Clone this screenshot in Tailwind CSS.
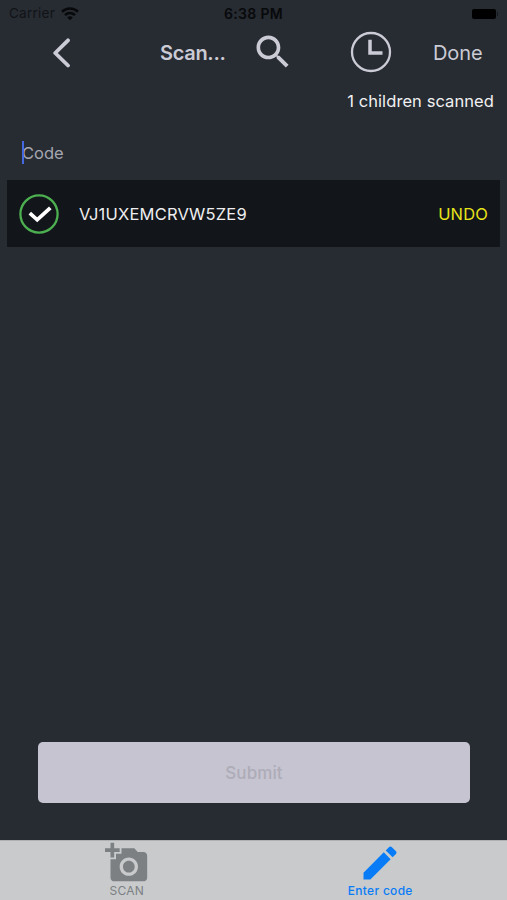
<!DOCTYPE html>
<html lang="en">
<head>
  <meta charset="UTF-8">
  <meta name="viewport" content="width=device-width, initial-scale=1.0">
  <title>Scan</title>
  <script src="https://cdn.jsdelivr.net/npm/@tailwindcss/browser@4"></script>
</head>
<body class="bg-[#272b32] font-['Inter','Liberation_Sans',sans-serif]">
  <div class="flex flex-col h-[900px] w-[507px] overflow-hidden">
    <!-- Status bar -->
    <div class="grid grid-cols-3 items-center h-[27px] shrink-0 pl-[9px] pr-[9px] text-[#08090b]">
      <div class="flex items-center gap-[6px]">
        <span class="text-[13.5px] tracking-[0.25px] text-[#111317]">Carrier</span>
        <svg class="w-[18px] h-[14px]" viewBox="0 0 18 14" fill="none" stroke="currentColor" stroke-width="2.6">
          <path d="M1 4.700c4.600-4.300 11.400-4.300 16 0"/>
          <path d="M4 8.100c2.900-2.700 7.100-2.700 10 0"/>
          <path d="M9 13.300L6.200 10.400c1.600-1.500 4-1.500 5.600 0z" fill="currentColor" stroke="none"/>
        </svg>
      </div>
      <span class="text-center text-[14px] font-semibold tracking-[0.35px] whitespace-nowrap">6:38 PM</span>
      <div class="flex items-center justify-end gap-[1px]">
        <div class="w-[24px] h-[10px] rounded-[2px] bg-black"></div>
        <div class="w-[1px] h-[4px] bg-[#15181c]"></div>
      </div>
    </div>

    <!-- Navigation -->
    <header class="flex items-center h-[50px] shrink-0 text-[#cbcbd5]">
      <svg class="ml-[51px] w-[20px] h-[32px]" viewBox="0 0 20 32" fill="none" stroke="currentColor" stroke-width="3.800" stroke-linecap="round" stroke-linejoin="round">
        <path d="M17 4.300L4.200 17l12.800 12.500"/>
      </svg>
      <h1 class="ml-[89px] w-[66px] pt-[1px] text-[20px] font-semibold tracking-[-0.3px] whitespace-nowrap">Scan...</h1>
      <svg class="ml-[25px] w-[44px] h-[44px]" viewBox="0 0 24 24" fill="currentColor">
        <path d="M15.500 14h-.79l-.28-.27C15.410 12.590 16 11.110 16 9.500 16 5.910 13.090 3 9.500 3S3 5.910 3 9.500 5.910 16 9.500 16c1.610 0 3.090-.59 4.230-1.570l.27.28v.79l5 4.990L20.490 19l-4.990-5zm-6 0C7.010 14 5 11.990 5 9.500S7.010 5 9.500 5 14 7.010 14 9.500 11.990 14 9.500 14z"/>
      </svg>
      <svg class="ml-[55px] w-[42px] h-[42px]" viewBox="0 0 42 42" fill="none" stroke="currentColor">
        <circle cx="21" cy="21" r="19" stroke-width="2.300"/>
        <path d="M20 8.800v13.200h12.500" stroke-width="3.500"/>
      </svg>
      <span class="ml-[41px] pt-[1px] text-[20px] tracking-[-0.1px]">Done</span>
    </header>
    <p class="h-[50px] shrink-0 pr-[13px] text-right text-[16.500px] leading-[49px] tracking-[0.08px] text-[#f1f1f3]">1 children scanned</p>

    <!-- Code input -->
    <div class="relative flex items-center h-[53px] shrink-0 pl-[22px]">
      <span class="text-[16.500px] text-[#a6a6b0]">Code</span>
      <div class="absolute left-[22px] top-[14px] w-[2px] h-[23px] bg-[#4468e0]"></div>
    </div>

    <!-- Scanned code -->
    <div class="flex items-center mx-[7px] h-[67px] shrink-0 bg-[#121519] pt-px pl-[12px] pr-[12px] text-[16.500px]">
      <svg class="w-[40px] h-[40px]" viewBox="0 0 40 40" fill="none">
        <circle cx="20" cy="20" r="18.600" stroke="#4caf50" stroke-width="2.300"/>
        <path d="M10.800 19.200l7.400 6.600L31.300 13.800" stroke="#ffffff" stroke-width="3.800"/>
      </svg>
      <span class="ml-[20px] tracking-[0.2px] text-[#eeeef0]">VJ1UXEMCRVW5ZE9</span>
      <button class="ml-auto tracking-[0.15px] text-[#e8e41a]">UNDO</button>
    </div>

    <button class="mt-auto ml-[38px] mr-[37px] mb-[37px] h-[61px] shrink-0 rounded-[5px] bg-[#c6c4d1] pt-[2px] text-[17px] font-medium tracking-[0.100px] text-[#adacb7]">Submit</button>

    <!-- Tabs -->
    <nav class="grid grid-cols-2 h-[60px] shrink-0 border-t border-[#aeb0b2] bg-[#c8cacc] text-[12px]">
      <a class="flex flex-col items-center text-[#7c8083]">
        <svg class="w-[44px] h-[44px]" viewBox="0 0 24 24" fill="currentColor">
          <path d="M3 4V1h2v3h3v2H5v3H3V6H0V4h3zm3 6V7h3V4h7l1.830 2H21c1.100 0 2 .9 2 2v12c0 1.100-.9 2-2 2H5c-1.100 0-2-.9-2-2V10h3zm7 9c2.760 0 5-2.240 5-5s-2.240-5-5-5-5 2.240-5 5 2.240 5 5 5zm-3.200-5c0 1.770 1.430 3.200 3.200 3.200s3.200-1.430 3.200-3.200-1.430-3.200-3.200-3.200-3.200 1.430-3.200 3.200z"/>
        </svg>
        <span class="-mt-[2px] leading-[16px] tracking-[0.2px]">SCAN</span>
      </a>
      <a class="flex flex-col items-center text-[#087cf7]">
        <svg class="w-[44px] h-[44px]" viewBox="0 0 24 24" fill="currentColor">
          <path d="M3 17.250V21h3.750L17.810 9.940l-3.750-3.750L3 17.250zM20.710 7.040c.39-.39.39-1.020 0-1.410l-2.340-2.340c-.39-.39-1.020-.39-1.410 0l-1.830 1.830 3.750 3.750 1.830-1.830z"/>
        </svg>
        <span class="-mt-[2px] leading-[16px] font-medium tracking-[0.3px]">Enter code</span>
      </a>
    </nav>
  </div>
</body>
</html>
